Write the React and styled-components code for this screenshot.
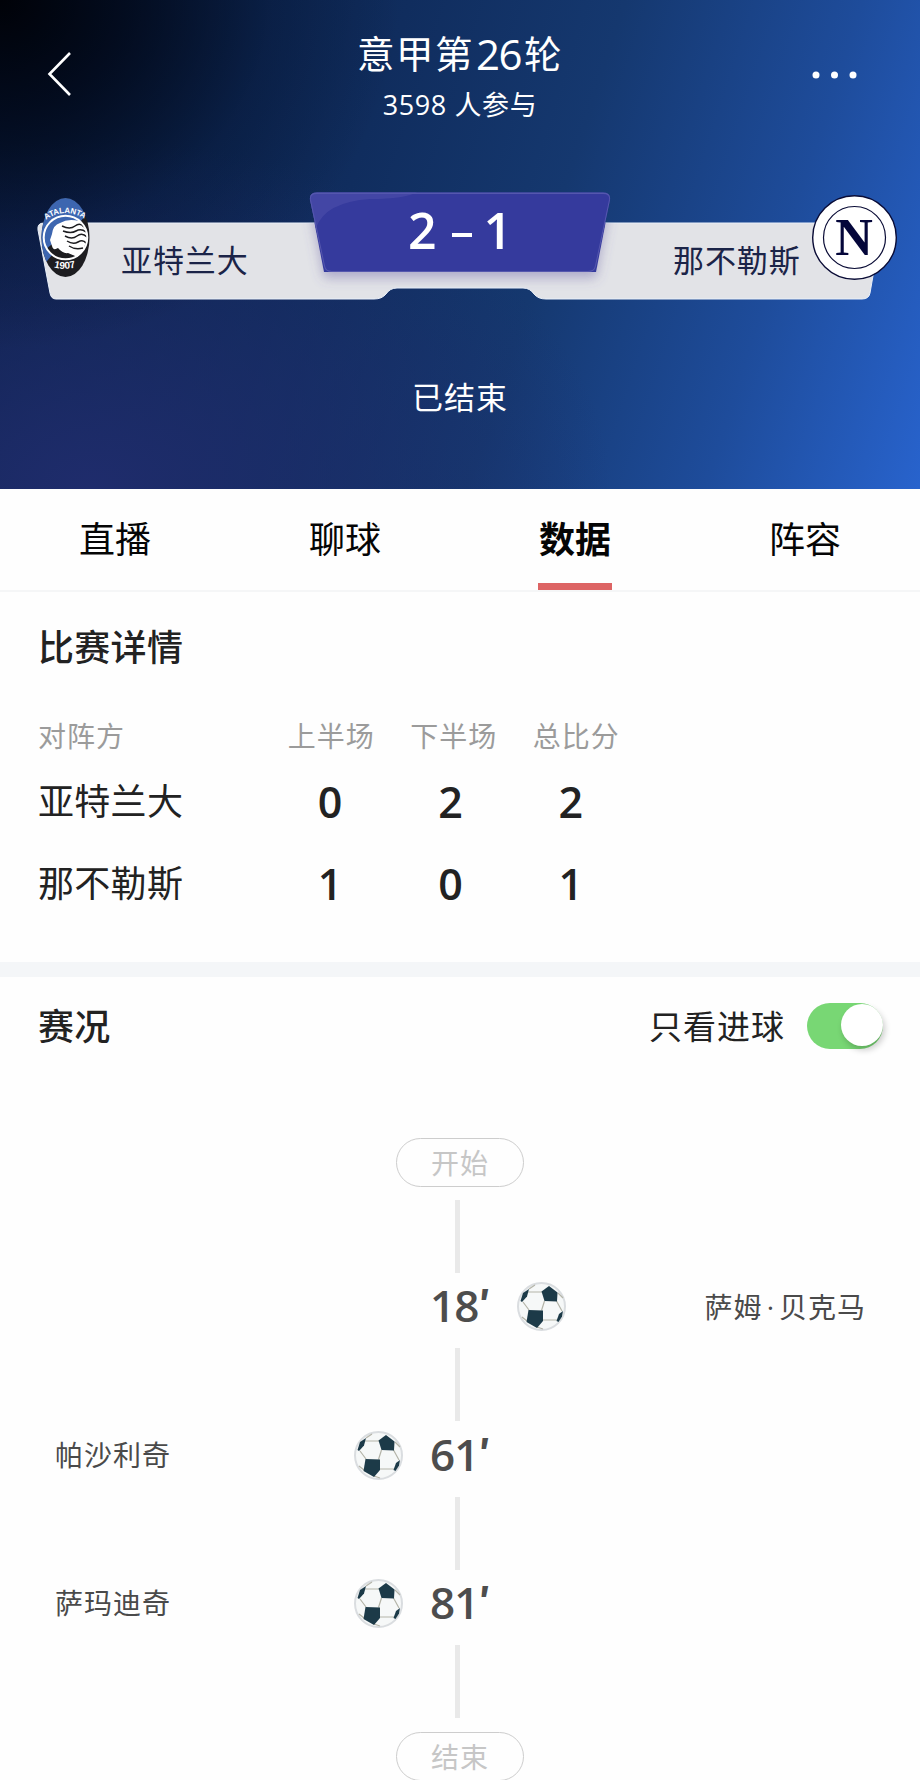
import React from 'react';
import styled, { createGlobalStyle } from 'styled-components';

const GlobalStyle = createGlobalStyle`
  * {
    box-sizing: border-box;
  }
  body {
    margin: 0;
    background: #fefefe;
    font-family: "Open Sans", "Noto Sans CJK SC", sans-serif;
    color: #222;
  }
`;

const Page = styled.div`
  width: 920px;
  height: 1780px;
  overflow: hidden;
`;

const Header = styled.header`
  height: 489px;
  color: #fff;
  background:
    radial-gradient(ellipse 400px 350px at 0% 0%, #000208 0%, rgba(0, 4, 16, 0.72) 32%, rgba(0, 8, 30, 0.25) 68%, rgba(0, 8, 30, 0) 100%),
    radial-gradient(ellipse 520px 350px at 10% 100%, #1f2c6c 0%, rgba(31, 44, 106, 0) 100%),
    linear-gradient(108deg, #081c3e 0%, #102d5e 38%, #15386f 58%, #1e4c9b 80%, #2863cd 100%);
`;

const TopBar = styled.div`
  display: flex;
  align-items: flex-start;
  justify-content: space-between;
  height: 192px;
  padding: 31px 62px 0 47px;
`;

const TopIcon = styled.svg`
  display: block;
  margin-top: ${(props) => props.$top}px;
`;

const Titles = styled.div`
  display: flex;
  flex-direction: column;
  align-items: center;
  padding-left: 15px;
`;

const Title = styled.div`
  display: flex;
  align-items: center;
  height: 46px;
  font-size: 37.5px;
  line-height: 46px;
  letter-spacing: 1.5px;
  white-space: nowrap;
`;

const Round = styled.span`
  font-size: 42px;
  letter-spacing: -1.5px;
  padding: 0 3px 0 2px;
`;

const Joined = styled.div`
  margin-top: 4px;
  font-size: 27px;
  line-height: 48px;
  letter-spacing: 0.6px;
  white-space: nowrap;
`;

const Scoreboard = styled.div`
  position: relative;
  height: 110px;
`;

const BoardShape = styled.svg`
  position: absolute;
  left: 0;
  top: 0;
`;

const BoardRow = styled.div`
  position: relative;
  display: flex;
  align-items: flex-start;
  padding: 0 23px 0 41px;
`;

const Crest = styled.svg`
  flex: none;
  margin-top: ${(props) => props.$top}px;
`;

const TeamName = styled.div`
  width: ${(props) => props.$width}px;
  padding-left: ${(props) => props.$indent}px;
  margin-top: 46px;
  font-size: 31px;
  line-height: 44px;
  letter-spacing: 0.9px;
  color: #1b2448;
  white-space: nowrap;
`;

const Score = styled.div`
  display: flex;
  align-items: center;
  justify-content: center;
  width: 300px;
  height: 77px;
  font-size: 50px;
  font-weight: 600;
  line-height: 77px;
`;

const Dash = styled.span`
  width: 20px;
  height: 4px;
  margin: 8px 12px 0 15px;
  background: #fff;
`;

const Status = styled.div`
  padding-top: 73px;
  text-align: center;
  font-size: 31px;
  line-height: 44px;
  letter-spacing: 1px;
`;

const Tabs = styled.nav`
  display: flex;
  height: 103px;
  border-bottom: 2px solid #f5f6f7;
`;

const Tab = styled.div`
  display: flex;
  flex-direction: column;
  align-items: center;
  justify-content: space-between;
  width: 230px;
  padding-top: 25px;
  font-size: 36px;
  line-height: 52px;
  font-weight: ${(props) => (props.$active ? 700 : 400)};
  color: #050505;

  &::after {
    content: '';
    width: 74px;
    height: 7px;
    background: ${(props) => (props.$active ? '#dd6464' : 'transparent')};
  }
`;

const SectionTitle = styled.h2`
  margin: 0;
  padding-top: 1px;
  font-size: 36px;
  line-height: 52px;
  font-weight: 500;
  letter-spacing: 0.3px;
  color: #222;
`;

const Details = styled.section`
  height: 370px;
  padding: 29px 38px 0;
`;

const HeadRow = styled.div`
  display: grid;
  grid-template-columns: 232px repeat(3, 122.5px);
  align-items: center;
  height: 50px;
  margin-top: 37px;
`;

const HeadCell = styled.div`
  font-size: 28px;
  line-height: 40px;
  letter-spacing: 1px;
  text-align: ${(props) => (props.$first ? 'left' : 'center')};
  color: #9b9b9b;
`;

const TeamRow = styled.div`
  display: grid;
  grid-template-columns: 232px repeat(3, 120.3px);
  align-items: center;
  height: 82px;
`;

const TeamCell = styled.div`
  font-size: 36px;
  line-height: 52px;
  letter-spacing: 0.3px;
`;

const NumCell = styled.div`
  padding-bottom: 1px;
  font-size: 43px;
  font-weight: 600;
  line-height: 52px;
  text-align: center;
`;

const Divider = styled.div`
  height: 15px;
  background: #f4f6f8;
`;

const EventsHead = styled.div`
  display: flex;
  align-items: center;
  height: 98px;
  padding: 0 37px 0 38px;
`;

const ToggleLabel = styled.span`
  margin-left: auto;
  margin-right: 22px;
  padding-top: 2px;
  font-size: 33px;
  line-height: 48px;
  letter-spacing: 1px;
`;

const Toggle = styled.div`
  display: flex;
  justify-content: flex-end;
  width: 76px;
  height: 46px;
  border-radius: 23px;
  background: #78d774;
`;

const Knob = styled.div`
  width: 42px;
  height: 42px;
  margin-top: 1px;
  border-radius: 50%;
  background: #fff;
  box-shadow: 2px 4px 6px rgba(0, 0, 0, 0.2);
`;

const Timeline = styled.div`
  display: flex;
  flex-direction: column;
  align-items: center;
  padding-top: 63px;
`;

const Pill = styled.div`
  display: flex;
  flex: none;
  align-items: center;
  justify-content: center;
  width: 128px;
  height: 49px;
  margin: ${(props) => (props.$end ? '14px 0 0' : '0 0 13px')};
  border: 1px solid #cdcdcd;
  border-radius: 25px;
  font-size: 28px;
  letter-spacing: 1px;
  line-height: 40px;
  color: #c6c6c6;
`;

const Line = styled.div`
  flex: none;
  width: 5px;
  height: 73px;
  margin-right: 5px;
  background: #e9e9e9;
`;

const EventRow = styled.div`
  display: grid;
  grid-template-columns: 230px 174px 112px 174px 230px;
  align-items: center;
  width: 920px;
  height: 75.4px;
  padding-bottom: 8px;
`;

const Player = styled.div`
  display: flex;
  justify-content: ${(props) => (props.$away ? 'flex-end' : 'flex-start')};
  gap: 4px;
  padding: ${(props) => (props.$away ? '0 54px 0 0' : '0 0 0 55px')};
  font-size: 28px;
  line-height: 40px;
  letter-spacing: 1px;
  color: #4a4a4a;
  white-space: nowrap;
`;

const BallCell = styled.div`
  display: flex;
  justify-content: ${(props) => (props.$away ? 'flex-start' : 'flex-end')};
  padding: 0 1px;
`;

const Minute = styled.div`
  display: flex;
  padding: 0 0 3px 26px;
  font-size: 44px;
  font-weight: 600;
  line-height: 60px;
  letter-spacing: -1px;
  color: #4d4d4d;
`;

const Prime = styled.span`
  margin-left: 1px;
  font-family: "Inter", sans-serif;
  font-size: 38px;
  line-height: 57px;
  font-weight: 800;
`;

const events = [
  { minute: 18, player: '萨姆·贝克马', away: true },
  { minute: 61, player: '帕沙利奇', away: false },
  { minute: 81, player: '萨玛迪奇', away: false },
];

const rows = [
  { team: '亚特兰大', scores: [0, 2, 2] },
  { team: '那不勒斯', scores: [1, 0, 1] },
];

function Ball() {
  return (
    <svg width="49" height="49" viewBox="0 0 49 49">
      <circle cx="24.5" cy="24.5" r="23.5" fill="#f6f8f8" stroke="#dadde0" strokeWidth="2" />
      <path
        d="M11 10H25M27.5 19L24.500 28.500M39.500 19L45 29M26 38H40M6 20L12 28M12 7L18 3M41 11L46 16M10 39L5 35M20 45L26 47"
        fill="none"
        stroke="#b4b4a8"
        strokeWidth="1.200"
      />
      <g fill="#1c3a48">
        <path d="M32 4L40.500 10.500L40 19.500L27.500 19L24.500 9.500Z" />
        <path d="M11.500 28L26 28.500L26 39L20 46L9.500 40Z" />
        <path d="M3.500 19L6 11L12 7L10 14.500L5 20Z" />
        <path d="M39.500 39L42 32L46 29L45 34.500L41.500 40Z" />
      </g>
    </svg>
  );
}

function AtalantaCrest() {
  return (
    <Crest $top={5} width="50" height="81" viewBox="0 0 50 81">
      <defs>
        <clipPath id="crest">
          <ellipse cx="24.500" cy="40.500" rx="24" ry="39.500" />
        </clipPath>
        <path id="arcTop" d="M5 23Q24 9 45 23" />
        <path id="arcBottom" d="M10 69.500Q26 75.500 46 66" />
      </defs>
      <g clipPath="url(#crest)">
        <rect width="50" height="81" fill="#1d1d20" />
        <path d="M0 0H50V12L6 64L0 70Z" fill="#3d66b0" />
        <circle cx="24.500" cy="40.500" r="22" fill="#1d1d20" />
        <path d="M5 52A22 22 0 0 1 40 25L20 40Z" fill="#3d66b0" />
        <path d="M19 26Q27 21 38 24Q46 31 46 42Q43 54 36 60Q30 57 27 56Q22 57 17 51Q12 54 11 49L9 43L11 37Q12 28 19 26Z" fill="#fff" />
        <g fill="none" stroke="#1d1d20" strokeWidth="1.500">
          <path d="M21 29Q29 33 34 29T43 30M22 34Q30 37 35 34T45 35M24 39Q31 43 36 39T46 40M26 44Q32 48 37 45T45 46M28 49Q34 53 42 51" />
        </g>
        <circle cx="24.500" cy="40.500" r="21.800" fill="none" stroke="#fff" strokeWidth="2" />
      </g>
      <g fill="#fff" fontFamily="Liberation Sans" fontWeight="700">
        <text fontSize="8">
          <textPath href="#arcTop" textLength="41" lengthAdjust="spacingAndGlyphs">ATALANTA</textPath>
        </text>
        <text fontSize="10">
          <textPath href="#arcBottom" startOffset="3">1907</textPath>
        </text>
      </g>
    </Crest>
  );
}

function NapoliCrest() {
  return (
    <Crest $top={3} width="86" height="86" viewBox="0 0 86 86">
      <circle cx="43.500" cy="42.500" r="41.800" fill="#fff" stroke="#0a0c36" strokeWidth="1.400" />
      <circle cx="43.500" cy="42.500" r="31" fill="none" stroke="#0a0c36" strokeWidth="1.200" />
      <text x="43" y="60" textAnchor="middle" fontFamily="Liberation Serif" fontWeight="700" fontSize="52" fill="#04063a">
        N
      </text>
    </Crest>
  );
}

function Board() {
  return (
    <BoardShape width="920" height="110" viewBox="0 192 920 110">
      <defs>
        <filter id="plateShadow" x="-10%" y="-20%" width="120%" height="160%">
          <feDropShadow dx="0" dy="6" stdDeviation="6" floodColor="#5c559f" floodOpacity="0.4" />
        </filter>
        <clipPath id="barClip">
          <path d="M44 223H875Q882 223 881 230L870 293Q869 299 862 299H546Q538 299 534 294Q530 288 523 288H397Q390 288 386 294Q382 299 374 299H56Q51 299 50 293L38 230Q37 223 44 223Z" />
        </clipPath>
        <clipPath id="plateClip">
          <path d="M317 192.500H603Q611 192.500 610 200L596 266Q595 272 588 272H332Q325 272 324 266L310 200Q309 192.500 317 192.500Z" />
        </clipPath>
      </defs>
      <path
        d="M44 223H875Q882 223 881 230L870 293Q869 299 862 299H546Q538 299 534 294Q530 288 523 288H397Q390 288 386 294Q382 299 374 299H56Q51 299 50 293L38 230Q37 223 44 223Z"
        fill="#e2e3e7"
        stroke="#e9f0fa"
        strokeWidth="1"
      />
      <g clipPath="url(#barClip)">
        <path d="M310 200L324 272H596L610 200Z" fill="#363a9e" filter="url(#plateShadow)" />
      </g>
      <g clipPath="url(#plateClip)">
        <rect x="305" y="190" width="310" height="84" fill="#353a9d" />
        <path d="M305 190H420Q410 199 370 199Q325 202 316 228L305 240Z" fill="#4a4ba8" opacity="0.700" />
        <path
          d="M317 193H603Q611 193 610 200L596 266Q595 272 588 272H332Q325 272 324 266L310 200Q309 193 317 193Z"
          fill="none"
          stroke="#5557ae"
          strokeWidth="2"
        />
      </g>
    </BoardShape>
  );
}

export default function App() {
  return (
    <Page>
      <GlobalStyle />
      <Header>
        <TopBar>
          <TopIcon $top={20} width="46" height="46" viewBox="0 0 46 46">
            <path d="M23 2L2.500 23L23 44" fill="none" stroke="#fff" strokeWidth="2.600" />
          </TopIcon>
          <Titles>
            <Title>
              意甲第<Round>26</Round>轮
            </Title>
            <Joined>3598 人参与</Joined>
          </Titles>
          <TopIcon $top={39} width="46" height="10" viewBox="0 0 46 10" fill="#fff">
            <circle cx="4" cy="5" r="3.500" />
            <circle cx="22.500" cy="5" r="3.500" />
            <circle cx="41" cy="5" r="3.500" />
          </TopIcon>
        </TopBar>
        <Scoreboard>
          <Board />
          <BoardRow>
            <AtalantaCrest />
            <TeamName $width={219} $indent={30}>亚特兰大</TeamName>
            <Score>
              <span>2</span>
              <Dash />
              <span>1</span>
            </Score>
            <TeamName $width={201} $indent={63}>那不勒斯</TeamName>
            <NapoliCrest />
          </BoardRow>
        </Scoreboard>
        <Status>已结束</Status>
      </Header>

      <Tabs>
        <Tab>直播</Tab>
        <Tab>聊球</Tab>
        <Tab $active>数据</Tab>
        <Tab>阵容</Tab>
      </Tabs>

      <Details>
        <SectionTitle>比赛详情</SectionTitle>
        <HeadRow>
          <HeadCell $first>对阵方</HeadCell>
          <HeadCell>上半场</HeadCell>
          <HeadCell>下半场</HeadCell>
          <HeadCell>总比分</HeadCell>
        </HeadRow>
        {rows.map((row) => (
          <TeamRow key={row.team}>
            <TeamCell>{row.team}</TeamCell>
            {row.scores.map((score, i) => (
              <NumCell key={i}>{score}</NumCell>
            ))}
          </TeamRow>
        ))}
      </Details>

      <Divider />

      <EventsHead>
        <SectionTitle>赛况</SectionTitle>
        <ToggleLabel>只看进球</ToggleLabel>
        <Toggle>
          <Knob />
        </Toggle>
      </EventsHead>

      <Timeline>
        <Pill>开始</Pill>
        <Line />
        {events.map((event) => {
          // the middle dot of a two-part name gets air on both sides
          const name = event.player
            .split(/(·)/)
            .map((part, i) => <span key={i}>{part}</span>);
          return (
            <React.Fragment key={event.minute}>
              <EventRow>
                <Player>{!event.away && name}</Player>
                <BallCell>{!event.away && <Ball />}</BallCell>
                <Minute>
                  {event.minute}
                  <Prime>′</Prime>
                </Minute>
                <BallCell $away>{event.away && <Ball />}</BallCell>
                <Player $away>{event.away && name}</Player>
              </EventRow>
              <Line />
            </React.Fragment>
          );
        })}
        <Pill $end>结束</Pill>
      </Timeline>
    </Page>
  );
}
